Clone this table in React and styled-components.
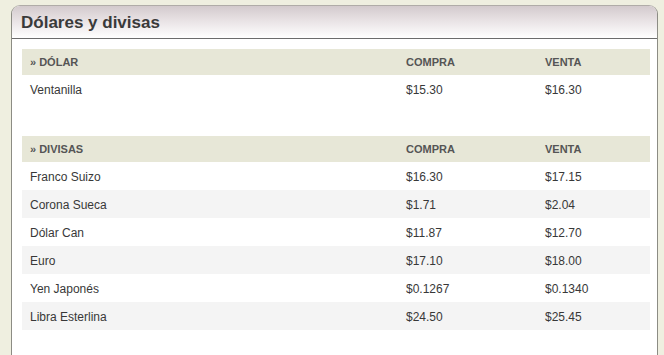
import React from "react";
import styled, { createGlobalStyle } from "styled-components";

const Global = createGlobalStyle`
  html, body { margin: 0; padding: 0; background: #efefe0; }
  body { font-family: "Liberation Sans", Arial, sans-serif; }
`;

const Page = styled.div`
  padding: 5px 6px 0 11px;
  height: 355px;
  box-sizing: border-box;
  overflow: hidden;
`;

const Panel = styled.section`
  width: 647px;
  height: 400px;
  box-sizing: border-box;
  background: #fff;
  border: 1px solid #8c8c84;
  border-top-color: #b0aca8;
  border-radius: 9px 9px 0 0;
  overflow: hidden;
`;

const PanelHeader = styled.header`
  height: 32px;
  display: flex;
  align-items: center;
  padding: 0 9px;
  background: linear-gradient(to bottom, #d3cacd 0%, #e8e2e4 45%, #ffffff 100%);
  border-bottom: 1px solid #6c6c6c;
`;

const Title = styled.h1`
  margin: 0;
  font-size: 17px;
  font-weight: bold;
  color: #3a3a3a;
  padding-top: 1px;
`;

const Body = styled.div`
  padding: 10px 7px 0 10px;
  display: flex;
  flex-direction: column;
  gap: 33px;
`;

const Table = styled.div`
  display: grid;
  grid-template-columns: 376px 139px 1fr;
`;

const Row = styled.div`
  display: contents;
`;

const Cell = styled.div`
  height: ${(p) => (p.$head ? 26 : 28)}px;
  box-sizing: border-box;
  display: flex;
  align-items: center;
  padding-left: 8px;
  padding-top: ${(p) => (p.$head ? 0 : 2)}px;
  background: ${(p) => (p.$head ? "#e7e7d7" : p.$alt ? "#f4f4f4" : "#fff")};
  color: ${(p) => (p.$head ? "#555" : "#383838")};
  font-size: ${(p) => (p.$head ? 11 : 12)}px;
  font-weight: ${(p) => (p.$head ? "bold" : "normal")};
  text-transform: ${(p) => (p.$head ? "uppercase" : "none")};
`;

const sections = [
  {
    title: "» Dólar",
    rows: [["Ventanilla", "$15.30", "$16.30"]],
  },
  {
    title: "» Divisas",
    rows: [
      ["Franco Suizo", "$16.30", "$17.15"],
      ["Corona Sueca", "$1.71", "$2.04"],
      ["Dólar Can", "$11.87", "$12.70"],
      ["Euro", "$17.10", "$18.00"],
      ["Yen Japonés", "$0.1267", "$0.1340"],
      ["Libra Esterlina", "$24.50", "$25.45"],
    ],
  },
];

export default function App() {
  return (
    <>
      <Global />
      <Page>
        <Panel>
          <PanelHeader>
            <Title>Dólares y divisas</Title>
          </PanelHeader>
          <Body>
            {sections.map((s) => (
              <Table key={s.title}>
                <Row>
                  <Cell $head>{s.title}</Cell>
                  <Cell $head>Compra</Cell>
                  <Cell $head>Venta</Cell>
                </Row>
                {s.rows.map((r, i) => (
                  <Row key={r[0]}>
                    {r.map((c, j) => (
                      <Cell key={j} $alt={i % 2 === 1}>
                        {c}
                      </Cell>
                    ))}
                  </Row>
                ))}
              </Table>
            ))}
          </Body>
        </Panel>
      </Page>
    </>
  );
}
